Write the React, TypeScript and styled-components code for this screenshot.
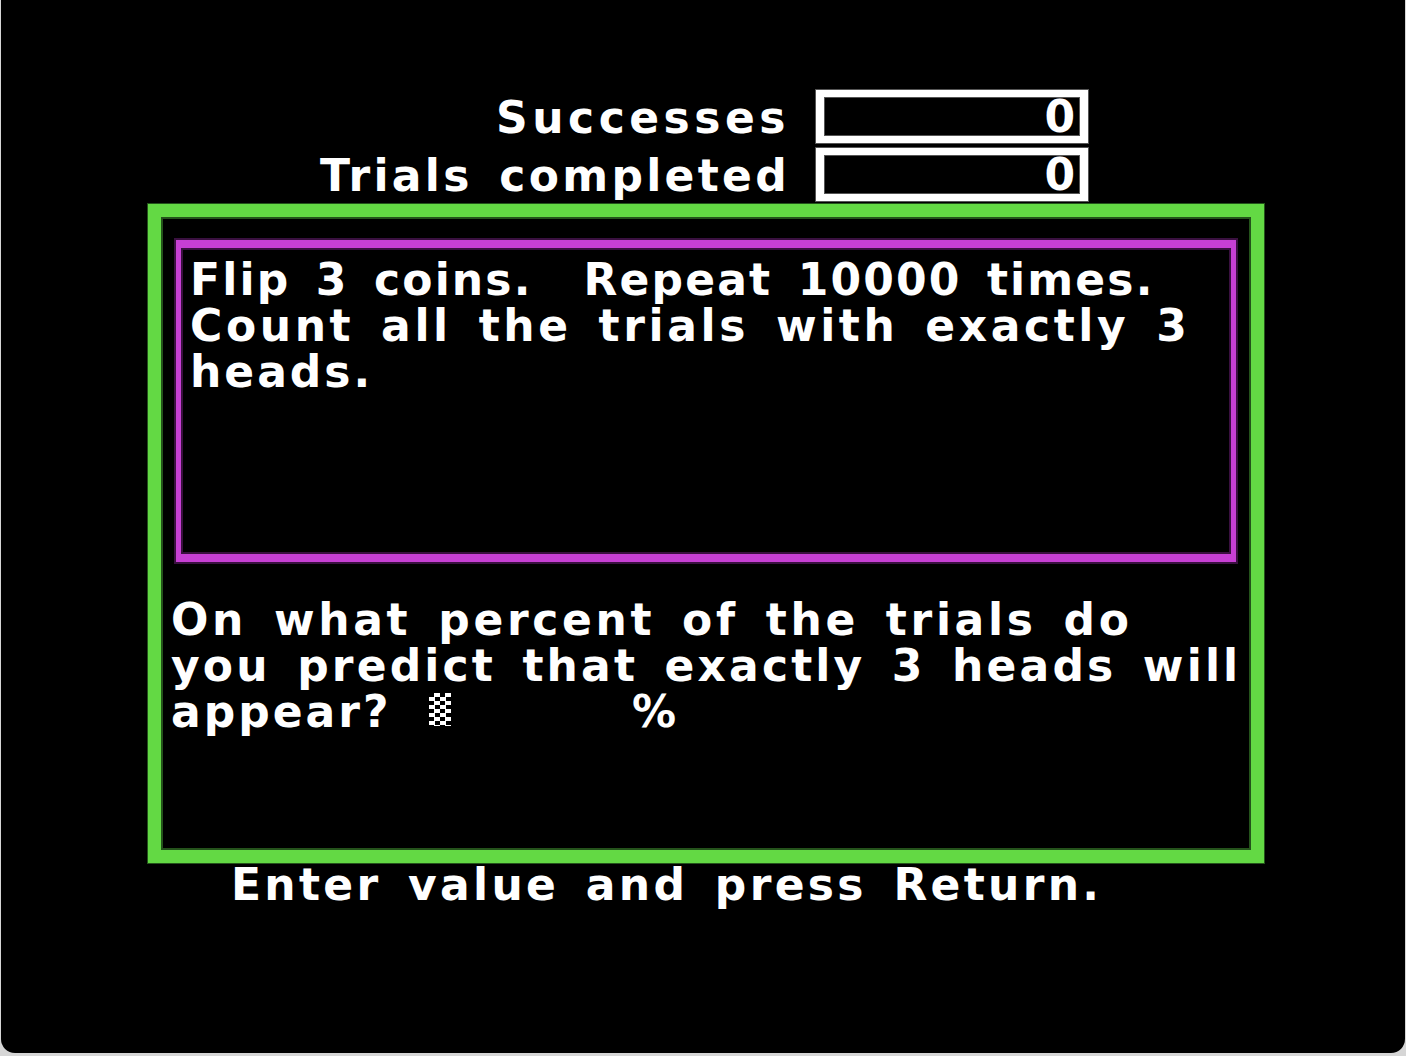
import React from "react";
import styled, { createGlobalStyle } from "styled-components";

const Global = createGlobalStyle`
  html, body {
    margin: 0;
    padding: 0;
    background: #d6d6d6;
  }
  body {
    width: 1406px;
    height: 1056px;
    overflow: hidden;
  }
`;

const Screen = styled.div`
  width: 1404px;
  height: 1053px;
  margin-left: 1px;
  box-sizing: border-box;
  padding-top: 90px;
  background: #000;
  border-radius: 0 0 14px 14px;
  display: flex;
  flex-direction: column;
  font-family: "DejaVu Sans", Verdana, sans-serif;
  font-weight: bold;
  font-size: 44px;
  line-height: 46px;
  letter-spacing: 3px;
  word-spacing: 8px;
  color: #fff;
  white-space: pre;
`;

const CounterGrid = styled.div`
  display: grid;
  grid-template-columns: 789px 272px;
  grid-auto-rows: 53px;
  column-gap: 26px;
  row-gap: 5px;
  align-items: center;
`;

const CounterLabel = styled.div<{ $spacing: number }>`
  text-align: right;
  letter-spacing: ${(p) => p.$spacing}px;
  margin-top: 2px;
`;

const CounterBox = styled.div`
  box-sizing: border-box;
  height: 100%;
  border-style: solid;
  border-color: #fff;
  border-width: 7px 8px;
  box-shadow: 0 0 0 1px #555, inset 0 0 0 1px #555;
  display: flex;
  align-items: center;
  justify-content: flex-end;
  padding-right: 2px;
`;

const GreenFrame = styled.div`
  box-sizing: border-box;
  margin: 3px 0 0 147px;
  width: 1116px;
  height: 659px;
  border: 13px solid #63d944;
  box-shadow: 0 0 0 1px #24531b, inset 0 0 0 2px #24531b;
  padding: 23px 16px 0 15px;
  display: flex;
  flex-direction: column;
`;

const MagentaBox = styled.div`
  box-sizing: border-box;
  width: 1060px;
  height: 322px;
  border-style: solid;
  border-color: #c73fd4;
  border-width: 8px 5px;
  box-shadow: 0 0 0 2px #3a1040, inset 0 0 0 2px #3a1040;
  padding: 9px 0 0 9px;
`;

const Line = styled.div<{ $spacing?: number }>`
  height: 46px;
  letter-spacing: ${(p) => p.$spacing ?? 3}px;
`;

const Question = styled.div`
  margin-top: 35px;
  margin-left: -5px;
`;

const AnswerLine = styled.div`
  height: 46px;
  display: flex;
  align-items: flex-start;
`;

const Prompt = styled.span`
  width: 258px;
`;

const Cursor = styled.span`
  margin-top: 4px;
  width: 22px;
  height: 33px;
  background: repeating-conic-gradient(#fff 0 25%, #000 0 50%) 0 0 / 11px 8px;
`;

const Percent = styled.span`
  margin-left: 181px;
`;

const Footer = styled.div`
  margin: -1px 0 0 230px;
  letter-spacing: 3.3px;
`;

export default function App() {
  return (
    <>
      <Global />
      <Screen>
        <CounterGrid>
          <CounterLabel $spacing={4.5}>Successes</CounterLabel>
          <CounterBox>0</CounterBox>
          <CounterLabel $spacing={3.3}>Trials completed</CounterLabel>
          <CounterBox>0</CounterBox>
        </CounterGrid>
        <GreenFrame>
          <MagentaBox>
            <Line $spacing={2.15}>Flip 3 coins.  Repeat 10000 times.</Line>
            <Line $spacing={3.6}>Count all the trials with exactly 3</Line>
            <Line>heads.</Line>
          </MagentaBox>
          <Question>
            <Line $spacing={3.65}>On what percent of the trials do</Line>
            <Line $spacing={3.15}>you predict that exactly 3 heads will</Line>
            <AnswerLine>
              <Prompt>appear?</Prompt>
              <Cursor />
              <Percent>%</Percent>
            </AnswerLine>
          </Question>
        </GreenFrame>
        <Footer>Enter value and press Return.</Footer>
      </Screen>
    </>
  );
}
